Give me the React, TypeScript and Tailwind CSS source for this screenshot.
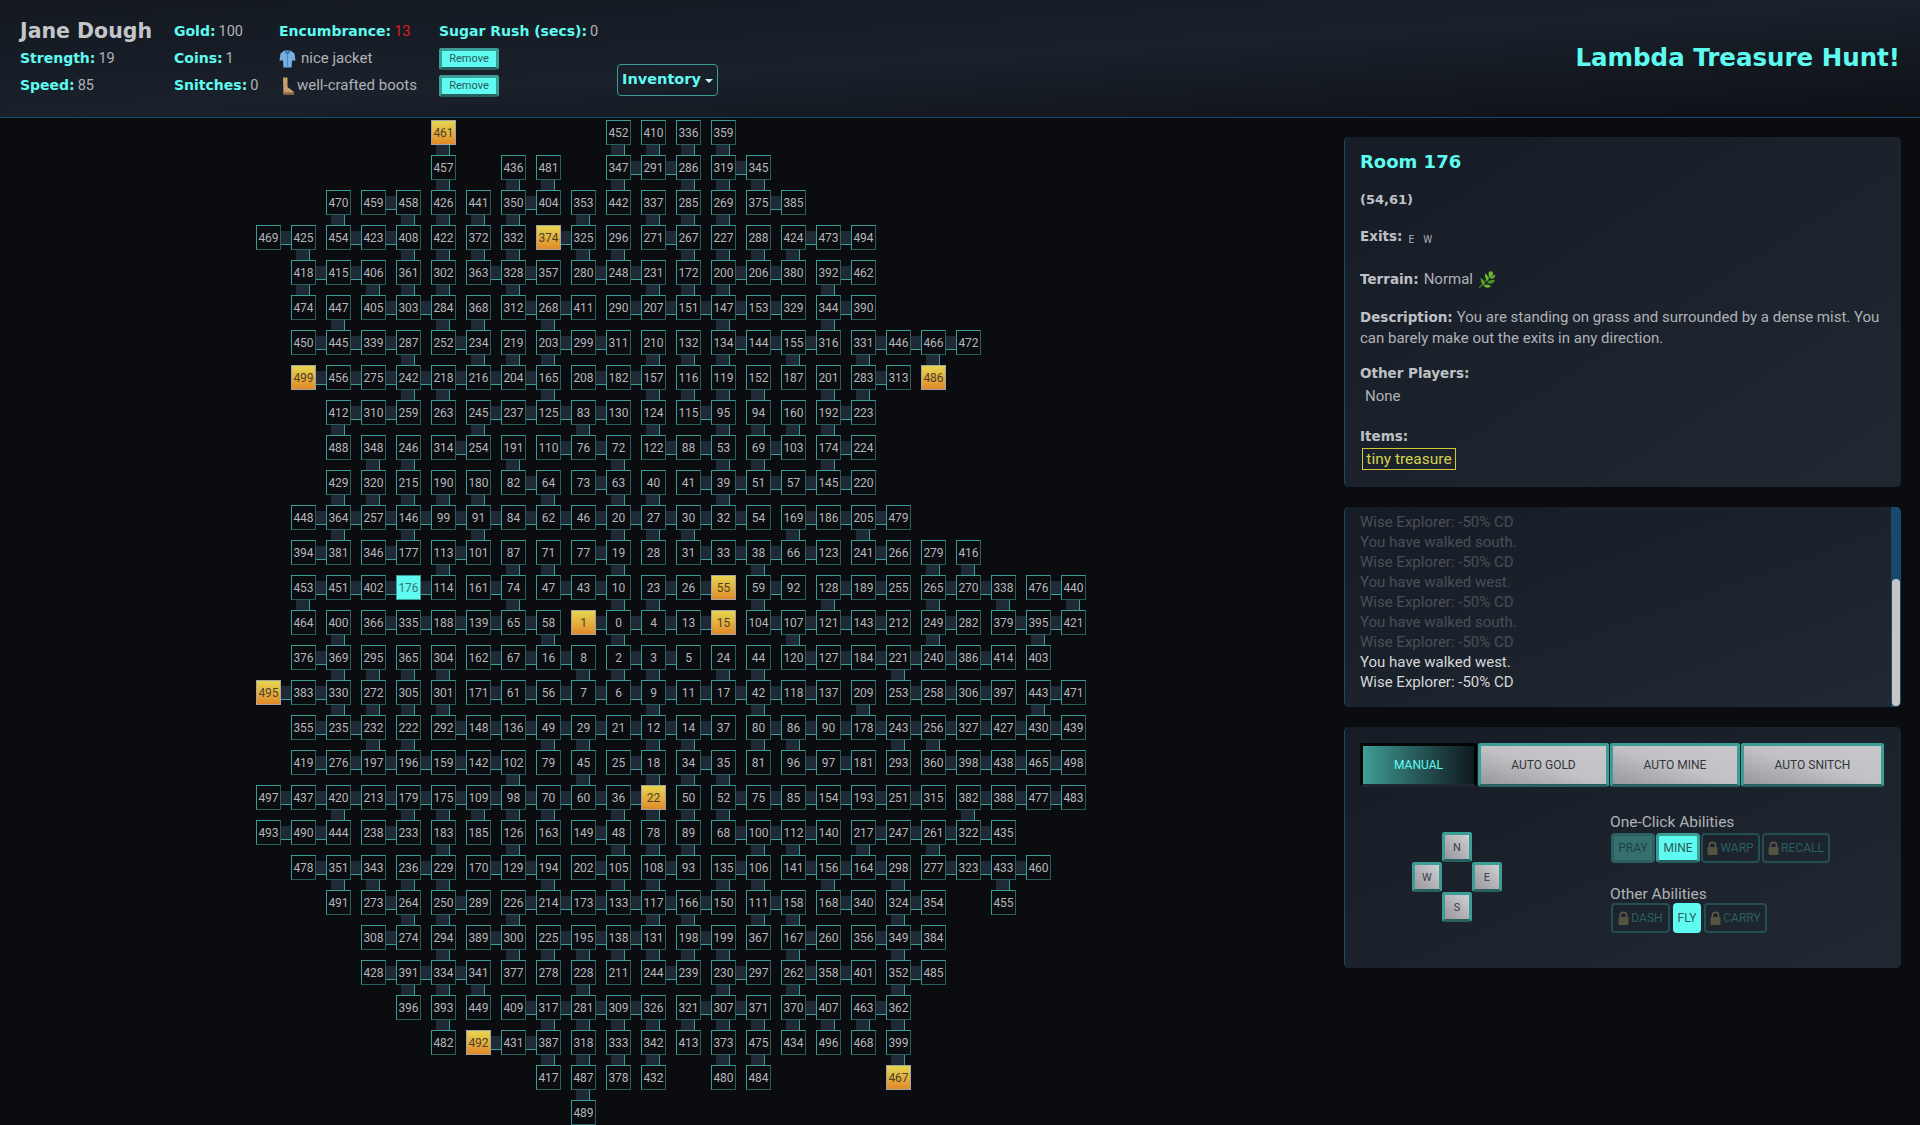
import { ReactNode } from "react";

const HEAD = "font-['DejaVu_Sans',sans-serif] font-bold";

// one string per map row: number + flags, e = link east, s = link south, g = gold room, c = current room
const MAP_ROWS = [
  ". . . . . 461gs . . . . 452s 410s 336s 359s",
  ". . . . . 457s . 436s 481s . 347es 291e 286s 319es 345s",
  ". . 470s 459e 458s 426s 441s 350es 404 353s 442 337s 285s 269s 375e 385",
  "469e 425s 454e 423e 408s 422s 372s 332s 374ge 325s 296s 271e 267s 227s 288s 424es 473e 494",
  ". 418es 415e 406s 361s 302s 363e 328es 357 280e 248e 231s 172s 200es 206e 380 392es 462",
  ". 474 447s 405e 303e 284s 368s 312e 268es 411 290e 207e 151e 147es 153e 329 344es 390",
  ". 450e 445e 339e 287s 252e 234s 219s 203es 299e 311 210s 132s 134es 144e 155es 316 331es 446e 466es 472",
  ". 499ge 456e 275e 242es 218es 216e 204e 165s 208e 182e 157s 116s 119s 152s 187 201s 283es 313 486g",
  ". . 412es 310e 259 263 245es 237e 125e 83es 130 124s 115e 95s 94s 160s 192es 223",
  ". . 488 348s 246s 314e 254 191s 110e 76e 72s 122e 88e 53s 69es 103 174es 224",
  ". . 429s 320s 215s 190s 180s 82e 64s 73e 63s 40s 41e 39es 51e 57e 145e 220",
  ". 448e 364es 257e 146es 99e 91es 84e 62e 46e 20es 27es 30es 32e 54 169es 186e 205es 479",
  ". 394e 381 346e 177 113es 101 87s 71s 77e 19s 28 31e 33e 38es 66e 123 241e 266 279s 416s",
  ". 453es 451e 402e 176ce 114 161e 74s 47e 43e 10s 23es 26e 55g 59es 92 128es 189e 255 265es 270e 338s 476e 440s",
  ". 464 400s 366e 335e 188e 139e 65e 58s 1ge 0es 4e 13e 15g 104e 107es 121e 143e 212 249es 282 379e 395es 421",
  ". 376e 369s 295s 365s 304s 162e 67e 16e 8s 2es 3es 5 24s 44s 120e 127e 184e 221es 240e 386e 414 403",
  "495ge 383e 330s 272s 305s 301s 171e 61e 56e 7e 6e 9es 11e 17e 42es 118e 137 209s 253e 258e 306e 397 443es 471",
  ". 355e 235e 232s 222s 292e 148e 136e 49es 29es 21e 12es 14es 37 80es 86es 90e 178e 243es 256es 327e 427e 430e 439",
  ". 419e 276e 197e 196e 159e 142e 102s 79 45s 25e 18s 34es 35s 81 96e 97e 181 293 360e 398e 438e 465e 498",
  "497e 437e 420es 213e 179es 175es 109es 98es 70es 60e 36es 22gs 50s 52es 75e 85e 154e 193e 251e 315 382es 388e 477e 483",
  "493e 490e 444 238e 233 183s 185 126s 163 149e 48s 78s 89s 68e 100es 112es 140 217es 247e 261es 322e 435",
  ". 478e 351es 343s 236es 229s 170e 129e 194s 202e 105s 108es 93 135es 106s 141e 156es 164e 298s 277e 323e 433es 460",
  ". . 491 273e 264s 250es 289 226es 214e 173e 133e 117es 166es 150 111es 158s 168e 340 324es 354 . 455",
  ". . . 308e 274 294s 389e 300s 225es 195es 138es 131s 198es 199s 367 167es 260 356e 349es 384",
  ". . . 428e 391es 334es 341s 377 278 228s 211 244e 239 230es 297 262es 358e 401 352es 485",
  ". . . . 396 393s 449 409e 317es 281es 309es 326s 321es 307es 371s 370es 407s 463es 362s",
  ". . . . . 482 492ge 431e 387s 318s 333s 342s 413 373s 475s 434 496 468 399s",
  ". . . . . . . . 417 487s 378 432 . 480 484 . . . 467g",
  ". . . . . . . . . 489",
];

function Room({ code }: { code: string }) {
  const id = code.replace(/[a-z]/g, "");
  const flags = code.replace(/\d/g, "");
  let look = "border-t-[#3a9d96] border-l-[#3a9d96] border-r-[#27605f] border-b-[#27605f] text-[#b4b7bb]";
  if (flags.includes("g")) {
    look = "border-[#a3a3a3] bg-gradient-to-b from-[#e6d652] to-[#e08a2a] text-[#4a4128]";
  }
  if (flags.includes("c")) {
    look = "border-[#3a9d96] bg-[#5ffbf1] text-[#3f7272]";
  }
  return (
    <div className="relative">
      <div className={`flex h-[25px] w-[25px] items-center justify-center border text-[12px] leading-none ${look}`}>
        {id}
      </div>
      {flags.includes("e") && (
        <div className="absolute left-[25px] top-[6px] h-[14px] w-[10px] border-b border-b-[#3a9d96] bg-[#1f2a36]" />
      )}
      {flags.includes("s") && (
        <div className="absolute left-[5px] top-[25px] h-[10px] w-[14px] border-r border-r-[#3a9d96] bg-[#1f2a36]" />
      )}
    </div>
  );
}

function TreasureMap() {
  return (
    <div className="grid grid-cols-[repeat(24,35px)] auto-rows-[35px]">
      {MAP_ROWS.map((row, r) => {
        const cells = row.split(" ");
        return Array.from({ length: 24 }, (_, c) => {
          const code = cells[c];
          return code && code !== "." ? <Room key={`${r}-${c}`} code={code} /> : <div key={`${r}-${c}`} />;
        });
      })}
    </div>
  );
}

function Stat({ label, value }: { label: string; value: ReactNode }) {
  return (
    <div className="flex h-[27px] items-center gap-[3px] whitespace-nowrap text-[14.5px] text-[#b0b2b7]">
      <span className={`${HEAD} text-[14px] text-[#5ffbf1]`}>{label}</span>
      <span>{value}</span>
    </div>
  );
}

function RemoveButton() {
  return (
    <div className="flex h-[27px] items-center">
      <button className="h-[22px] w-[60px] rounded-[3px] border-[3px] border-[#3a9d96] border-b-[#27605f] bg-[#5ffbf1] text-[11px] leading-none text-[#2c5a5a]">
        Remove
      </button>
    </div>
  );
}

function ShirtIcon() {
  return (
    <svg width="17" height="18" viewBox="0 0 17 18" className="mr-[5px]">
      <path d="M5.5 0.5 L11.5 0.5 L15.5 3.5 L16.5 10.5 L13 10.5 L12.6 17.5 L4.4 17.5 L4 10.5 L0.5 10.5 L1.5 3.5 Z" fill="#76aee0" />
      <path d="M5 0.5 L8.5 5 L12 0.5 L10.2 0.5 L8.5 2.2 L6.8 0.5 Z" fill="#2f6ea8" />
      <path d="M8.5 5 L8.5 17.5" stroke="#4a8ac2" strokeWidth="1" />
    </svg>
  );
}

function BootIcon() {
  return (
    <svg width="15" height="18" viewBox="0 0 15 18" className="mr-[2px]">
      <path d="M3 0.5 L7.5 0.5 L7.5 10 L13.5 14.5 L14 17.5 L3.5 17.5 Z" fill="#c99f70" />
      <path d="M3.4 15.5 L14 15.5 L14 17.5 L3.5 17.5 Z" fill="#8f6440" />
    </svg>
  );
}

function LeafIcon() {
  return (
    <svg width="18" height="18" viewBox="0 0 18 18" className="ml-[5px]">
      <path d="M1 17 C5 13 9 9 15 2" stroke="#3f7d22" strokeWidth="1.4" fill="none" />
      <path d="M11 0.5 C10 3 10.5 5.5 12.5 7 C14.5 5.5 15.5 2.5 14.5 0.5 Z" fill="#6fb52f" />
      <path d="M17.5 3.5 C15 4 13 5.5 12.5 7.5 C14.5 9 17 7.5 17.5 3.5 Z" fill="#5da12a" />
      <path d="M7 2.5 C6.5 5 7.5 8.5 9.5 10 C11.5 8 10.5 4.5 7 2.5 Z" fill="#6fb52f" />
      <path d="M17 9.5 C14 8.5 11 9 9 11.5 C11.5 13.5 15 13 17 9.5 Z" fill="#4f9527" />
      <path d="M2.5 7 C2.5 10 3.5 13 6 14.5 C7.8 12 6 8.5 2.5 7 Z" fill="#5da12a" />
      <path d="M13 15 C10.5 13 8 13 5.5 14.8 C7.5 17.2 11 17.5 13 15 Z" fill="#6fb52f" />
    </svg>
  );
}

function LockIcon() {
  return (
    <svg width="11" height="14" viewBox="0 0 11 14" className="mr-[2px] shrink-0">
      <path d="M2.5 7 L2.5 4 C2.5 0.5 8.5 0.5 8.5 4 L8.5 7" stroke="#5a5a48" strokeWidth="1.6" fill="none" />
      <rect x="0.5" y="6" width="10" height="8" rx="1" fill="#55553f" />
    </svg>
  );
}

function Header() {
  return (
    <header className="flex h-[118px] shrink-0 border-b border-b-[#1a4a6b] bg-gradient-to-tl from-[#0d1015] via-[#1a212b] to-[#131820] pt-[18px]">
      <div className="w-[174px] pl-5">
        <div className={`${HEAD} flex h-[27px] items-center text-[20.5px] text-[#c4c5c9]`}>Jane Dough</div>
        <Stat label="Strength:" value="19" />
        <Stat label="Speed:" value="85" />
      </div>
      <div className="w-[105px]">
        <Stat label="Gold:" value="100" />
        <Stat label="Coins:" value="1" />
        <Stat label="Snitches:" value="0" />
      </div>
      <div className="w-[160px]">
        <Stat label="Encumbrance:" value={<span className="text-[#e01b1b]">13</span>} />
        <div className="flex h-[27px] items-center text-[15px] text-[#b0b2b7]">
          <ShirtIcon />
          nice jacket
        </div>
        <div className="flex h-[27px] items-center pl-[1px] text-[15px] text-[#b0b2b7]">
          <BootIcon />
          well-crafted boots
        </div>
      </div>
      <div className="w-[178px]">
        <Stat label="Sugar Rush (secs):" value="0" />
        <RemoveButton />
        <RemoveButton />
      </div>
      <button
        className={`${HEAD} mt-[46px] flex h-[32px] w-[101px] items-center justify-center gap-1 rounded-[4px] border border-[#3a9d96] text-[14.5px] text-[#5ffbf1]`}
      >
        Inventory
        <span className="mt-[2px] border-x-[4px] border-t-[4px] border-x-transparent border-t-[#c8f4f0]" />
      </button>
      <div className={`${HEAD} ml-auto mr-5 mt-[23px] text-[24.5px] leading-[34px] text-[#5ffbf1]`}>
        Lambda Treasure Hunt!
      </div>
    </header>
  );
}

function Panel({ className, children }: { className: string; children: ReactNode }) {
  return (
    <section
      className={`relative overflow-hidden rounded-[5px] border-l border-l-[#1a4a6b] bg-gradient-to-br from-[#161c25] to-[#202832] ${className}`}
    >
      {children}
    </section>
  );
}

function Label({ children }: { children: ReactNode }) {
  return <span className={`${HEAD} text-[13.5px] text-[#bfc1c6]`}>{children}</span>;
}

function RoomPanel() {
  return (
    <Panel className="h-[350px] pl-[15px] pr-4 text-[15px] leading-[21px] text-[#b0b2b7]">
      <h2 className={`${HEAD} mt-[11px] h-[28px] text-[18px] leading-[28px] text-[#5ffbf1]`}>Room 176</h2>
      <p className={`${HEAD} mt-[13px] text-[13px] text-[#bfc1c6]`}>(54,61)</p>
      <p className="mt-[16px] flex h-[21px] items-center">
        <Label>Exits:</Label>
        <span className="ml-[6px] mt-[7px] text-[10px] leading-none">E</span>
        <span className="ml-[9px] mt-[7px] text-[10px] leading-none">W</span>
      </p>
      <p className="mt-[22px] flex h-[21px] items-center">
        <Label>Terrain:</Label>
        <span className="ml-[5px]">Normal</span>
        <LeafIcon />
      </p>
      <p className="mt-[17px]">
        <span className={`${HEAD} mr-[4px] text-[13.5px] text-[#bfc1c6]`}>Description:</span>
        You are standing on grass and surrounded by a dense mist. You can barely make out the exits in any direction.
      </p>
      <p className="mt-[14px]">
        <Label>Other Players:</Label>
      </p>
      <p className="mt-[2px] pl-[5px]">None</p>
      <p className="mt-[19px]">
        <Label>Items:</Label>
      </p>
      <div className="ml-[2px] mt-[1px] flex h-[22px] w-[94px] items-center justify-center border border-[#d3c83c] text-[15.5px] text-[#d6d14b]">
        tiny treasure
      </div>
    </Panel>
  );
}

const LOG_LINES = [
  "Wise Explorer: -50% CD",
  "You have walked south.",
  "Wise Explorer: -50% CD",
  "You have walked west.",
  "Wise Explorer: -50% CD",
  "You have walked south.",
  "Wise Explorer: -50% CD",
];

function LogPanel() {
  return (
    <Panel className="h-[200px] pl-[15px] pr-4 pt-[5px] text-[15px] leading-[20px]">
      {LOG_LINES.map((line, i) => (
        <div key={i} className="text-[#4a4f57]">
          {line}
        </div>
      ))}
      <div className="text-[#d6d7da]">You have walked west.</div>
      <div className="text-[#d6d7da]">Wise Explorer: -50% CD</div>
      <div className="absolute bottom-0 right-0 top-0 w-[10px] bg-[#1a4a6b]">
        <div className="absolute bottom-[1px] left-[1px] right-[1px] h-[127px] rounded-[4px] bg-[#c6c6c8]" />
      </div>
    </Panel>
  );
}

function ModeTab({ label, width, active }: { label: string; width: string; active?: boolean }) {
  const look = active
    ? "border-t-[#050505] border-x-[#050505] border-b-[#1f2731] bg-gradient-to-r from-[#3d9e96] to-[#0f1a20] text-[#5ffbf1]"
    : "border-[#3a9d96] border-b-[#27605f] bg-gradient-to-tr from-[#98989d] via-[#c2c2c6] to-[#c8c8cc] text-[#33363a]";
  return (
    <button className={`h-[44px] rounded-[3px] border-[3px] text-[12px] ${width} ${look}`}>{label}</button>
  );
}

function DirButton({ label, className }: { label: string; className: string }) {
  return (
    <button
      className={`h-[30px] w-[30px] rounded-[3px] border-[3px] border-[#3a9d96] border-b-[#27605f] bg-gradient-to-tr from-[#98989d] to-[#d0d0d3] text-[11px] leading-none text-[#3a3d42] ${className}`}
    >
      {label}
    </button>
  );
}

function Ability({ label, width, kind }: { label: string; width: string; kind: "locked" | "pray" | "on" | "fly" }) {
  const looks = {
    locked: "border-2 border-[#234e52] text-[#2c5f62]",
    pray: "border-[3px] border-[#2c5f62] bg-[#35706f] text-[#1d4246]",
    on: "border-[3px] border-[#3a9d96] border-b-[#27605f] bg-[#5ffbf1] text-[#2c5a5a]",
    fly: "bg-[#5ffbf1] text-[#2c5a5a]",
  };
  return (
    <button className={`flex h-[30px] items-center justify-center rounded-[4px] text-[12px] leading-none ${width} ${looks[kind]}`}>
      {kind === "locked" && <LockIcon />}
      {label}
    </button>
  );
}

function ControlsPanel() {
  return (
    <Panel className="h-[241px] pl-[15px] pt-4">
      <div className="flex gap-[1px]">
        <ModeTab label="MANUAL" width="w-[117px]" active />
        <ModeTab label="AUTO GOLD" width="w-[131px]" />
        <ModeTab label="AUTO MINE" width="w-[130px]" />
        <ModeTab label="AUTO SNITCH" width="w-[143px]" />
      </div>
      <div className="flex">
        <div className="ml-[52px] mt-[45px] grid h-[90px] w-[90px] grid-cols-3 grid-rows-3">
          <DirButton label="N" className="col-start-2 row-start-1" />
          <DirButton label="W" className="col-start-1 row-start-2" />
          <DirButton label="E" className="col-start-3 row-start-2" />
          <DirButton label="S" className="col-start-2 row-start-3" />
        </div>
        <div className="ml-[108px] mt-[25px] text-[15.5px] leading-[20px] text-[#b0b2b7]">
          <div>One-Click Abilities</div>
          <div className="mt-[1px] flex gap-[1px] pl-[1px]">
            <Ability label="PRAY" width="w-[44px]" kind="pray" />
            <Ability label="MINE" width="w-[44px]" kind="on" />
            <Ability label="WARP" width="w-[59px]" kind="locked" />
            <Ability label="RECALL" width="ml-[1px] w-[68px]" kind="locked" />
          </div>
          <div className="mt-[21px] h-[19px]">Other Abilities</div>
          <div className="flex gap-[3px] pl-[1px]">
            <Ability label="DASH" width="w-[59px]" kind="locked" />
            <Ability label="FLY" width="w-[28px]" kind="fly" />
            <Ability label="CARRY" width="w-[63px]" kind="locked" />
          </div>
        </div>
      </div>
    </Panel>
  );
}

export default function App() {
  return (
    <div className="flex h-[1125px] flex-col overflow-hidden bg-[#0a0c10] font-['Roboto',sans-serif]">
      <Header />
      <main className="flex flex-1">
        <div className="flex-1 pl-[256px] pt-[2px]">
          <TreasureMap />
        </div>
        <aside className="mr-[19px] mt-[19px] flex w-[557px] flex-col gap-5">
          <RoomPanel />
          <LogPanel />
          <ControlsPanel />
        </aside>
      </main>
    </div>
  );
}
